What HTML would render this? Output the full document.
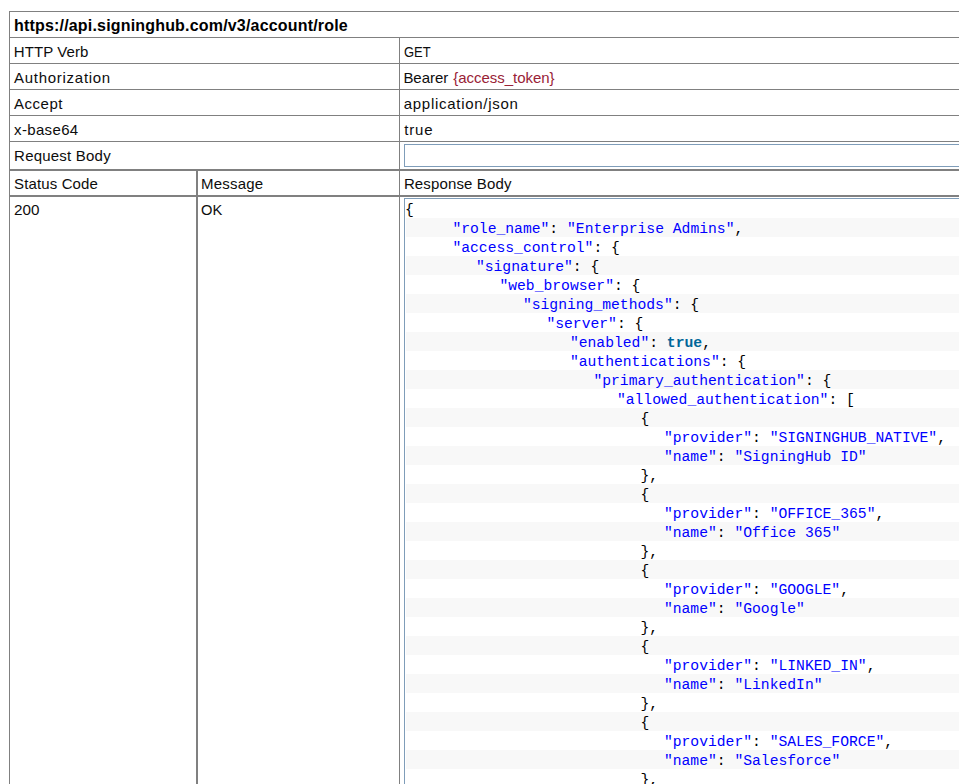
<!DOCTYPE html>
<html lang="en"><head><meta charset="utf-8"><title>Get Role</title>
<style>
html,body{margin:0;padding:0;background:#fff;}
body{width:959px;height:784px;overflow:hidden;position:relative;font-family:"Liberation Sans",Arial,sans-serif;font-size:15px;color:#0d0d0d;}
.h{position:absolute;left:9px;width:950px;height:1px;background:#808080;}
.h2{height:2px;}
.v{position:absolute;width:1px;background:#808080;}
.t{position:absolute;transform-origin:0 0;white-space:nowrap;line-height:20px;height:20px;}
.b{font-weight:bold;color:#000;font-size:16px;}
.red{color:#992236;margin-left:1px;}
.box{position:absolute;left:404px;width:600px;border:1px solid #7f9db9;background:#fff;box-sizing:border-box;}
.ln{height:19px;line-height:19px;white-space:pre;}
.alt{background:#f8f8f8;}
code{font-family:"Liberation Mono","DejaVu Sans Mono",monospace;font-size:14.7px;color:#000;display:inline-block;}
.s{color:#0000ff;}
.k{color:#006699;font-weight:bold;}
</style></head><body>
<div class="h" style="top:11px"></div>
<div class="h" style="top:37px"></div>
<div class="h" style="top:63px"></div>
<div class="h" style="top:89px"></div>
<div class="h" style="top:115px"></div>
<div class="h" style="top:141px"></div>
<div class="h h2" style="top:169px"></div>
<div class="h h2" style="top:195px"></div>
<div class="v" style="left:9px;top:11px;height:773px"></div>
<div class="v" style="left:399px;top:37px;height:747px"></div>
<div class="v" style="left:196px;top:171px;height:613px;width:2px"></div>
<div class="t b" style="left:14px;top:16px;letter-spacing:0.181px">https://api.signinghub.com/v3/account/role</div>
<div class="t" style="left:13.75px;top:42px;letter-spacing:0.082px">HTTP Verb</div>
<div class="t" style="left:403.5px;top:42px;transform:scaleX(0.8656)">GET</div>
<div class="t" style="left:14.1px;top:68px;letter-spacing:0.713px">Authorization</div>
<div class="t" style="left:403.4px;top:68px;letter-spacing:-0.04px">Bearer <span class="red">{access_token}</span></div>
<div class="t" style="left:14.1px;top:94px;letter-spacing:0.5px">Accept</div>
<div class="t" style="left:403.75px;top:94px;letter-spacing:0.71px">application/json</div>
<div class="t" style="left:14.1px;top:120px;letter-spacing:0.336px">x-base64</div>
<div class="t" style="left:404.25px;top:120px;letter-spacing:0.85px">true</div>
<div class="t" style="left:14.1px;top:146px;letter-spacing:0.214px">Request Body</div>
<div class="t" style="left:14.1px;top:174px;letter-spacing:0.125px">Status Code</div>
<div class="t" style="left:201.1px;top:174px;letter-spacing:0.192px">Message</div>
<div class="t" style="left:403.9px;top:174px;letter-spacing:0.138px">Response Body</div>
<div class="t" style="left:14.1px;top:200px;transform:scaleX(1.0168)">200</div>
<div class="t" style="left:201.1px;top:200px;transform:scaleX(0.9807)">OK</div>
<div class="box" style="top:144px;height:23px"></div>
<div class="box" style="top:198px;height:620px;padding:0 0 0 1px">
<div class="ln"><code style="margin-left:-1px">{</code></div>
<div class="ln alt"><code style="margin-left:46.4px"><span class="s">&quot;role_name&quot;</span>: <span class="s">&quot;Enterprise Admins&quot;</span>,</code></div>
<div class="ln"><code style="margin-left:46.4px"><span class="s">&quot;access_control&quot;</span>: {</code></div>
<div class="ln alt"><code style="margin-left:69.9px"><span class="s">&quot;signature&quot;</span>: {</code></div>
<div class="ln"><code style="margin-left:93.4px"><span class="s">&quot;web_browser&quot;</span>: {</code></div>
<div class="ln alt"><code style="margin-left:116.9px"><span class="s">&quot;signing_methods&quot;</span>: {</code></div>
<div class="ln"><code style="margin-left:140.4px"><span class="s">&quot;server&quot;</span>: {</code></div>
<div class="ln alt"><code style="margin-left:163.9px"><span class="s">&quot;enabled&quot;</span>: <span class="k">true</span>,</code></div>
<div class="ln"><code style="margin-left:163.9px"><span class="s">&quot;authentications&quot;</span>: {</code></div>
<div class="ln alt"><code style="margin-left:187.4px"><span class="s">&quot;primary_authentication&quot;</span>: {</code></div>
<div class="ln"><code style="margin-left:210.9px"><span class="s">&quot;allowed_authentication&quot;</span>: [</code></div>
<div class="ln alt"><code style="margin-left:234.4px">{</code></div>
<div class="ln"><code style="margin-left:257.9px"><span class="s">&quot;provider&quot;</span>: <span class="s">&quot;SIGNINGHUB_NATIVE&quot;</span>,</code></div>
<div class="ln alt"><code style="margin-left:257.9px"><span class="s">&quot;name&quot;</span>: <span class="s">&quot;SigningHub ID&quot;</span></code></div>
<div class="ln"><code style="margin-left:234.4px">},</code></div>
<div class="ln alt"><code style="margin-left:234.4px">{</code></div>
<div class="ln"><code style="margin-left:257.9px"><span class="s">&quot;provider&quot;</span>: <span class="s">&quot;OFFICE_365&quot;</span>,</code></div>
<div class="ln alt"><code style="margin-left:257.9px"><span class="s">&quot;name&quot;</span>: <span class="s">&quot;Office 365&quot;</span></code></div>
<div class="ln"><code style="margin-left:234.4px">},</code></div>
<div class="ln alt"><code style="margin-left:234.4px">{</code></div>
<div class="ln"><code style="margin-left:257.9px"><span class="s">&quot;provider&quot;</span>: <span class="s">&quot;GOOGLE&quot;</span>,</code></div>
<div class="ln alt"><code style="margin-left:257.9px"><span class="s">&quot;name&quot;</span>: <span class="s">&quot;Google&quot;</span></code></div>
<div class="ln"><code style="margin-left:234.4px">},</code></div>
<div class="ln alt"><code style="margin-left:234.4px">{</code></div>
<div class="ln"><code style="margin-left:257.9px"><span class="s">&quot;provider&quot;</span>: <span class="s">&quot;LINKED_IN&quot;</span>,</code></div>
<div class="ln alt"><code style="margin-left:257.9px"><span class="s">&quot;name&quot;</span>: <span class="s">&quot;LinkedIn&quot;</span></code></div>
<div class="ln"><code style="margin-left:234.4px">},</code></div>
<div class="ln alt"><code style="margin-left:234.4px">{</code></div>
<div class="ln"><code style="margin-left:257.9px"><span class="s">&quot;provider&quot;</span>: <span class="s">&quot;SALES_FORCE&quot;</span>,</code></div>
<div class="ln alt"><code style="margin-left:257.9px"><span class="s">&quot;name&quot;</span>: <span class="s">&quot;Salesforce&quot;</span></code></div>
<div class="ln"><code style="margin-left:234.4px">},</code></div>
</div>
</body></html>
